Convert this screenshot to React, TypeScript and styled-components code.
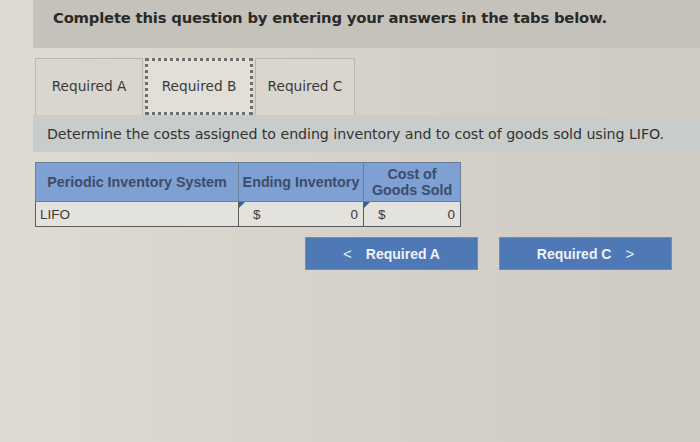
import React from 'react';
import styled, { createGlobalStyle } from 'styled-components';

const GlobalStyle = createGlobalStyle`
  html, body {
    margin: 0;
    padding: 0;
    background: #d8d4cb;
  }
  body {
    font-family: "DejaVu Sans", Verdana, sans-serif;
  }
`;

const Page = styled.div`
  width: 700px;
  height: 442px;
  overflow: hidden;
  display: flex;
  flex-direction: column;
  background: linear-gradient(90deg, #dedbd3 0%, #d6d2c9 50%, #cfcbc2 100%);
`;

const Banner = styled.div`
  margin-left: 33px;
  height: 48px;
  background: #c5c2bb;
  padding: 9px 0 0 20px;
  box-sizing: border-box;
  font-size: 14.8px;
  font-weight: bold;
  color: #2a2a2a;
  letter-spacing: -0.2px;
`;

const Content = styled.div`
  margin-left: 35px;
  padding-top: 10px;
  display: flex;
  flex-direction: column;
`;

const TabRow = styled.div`
  display: flex;
  gap: 2px;
  height: 57px;
  align-items: stretch;
`;

const Tab = styled.div<{ $active?: boolean; $width: number }>`
  width: ${(props) => props.$width}px;
  box-sizing: border-box;
  display: flex;
  align-items: center;
  justify-content: center;
  font-size: 13.7px;
  color: #3a3a3a;
  background: ${(props) => (props.$active ? '#e2dfd8' : '#d9d6ce')};
  border: ${(props) => (props.$active ? '3px dotted #6e6e6e' : '1px solid #bcb8b0')};
  border-bottom: ${(props) => (props.$active ? '3px dotted #6e6e6e' : 'none')};
  padding-bottom: 2px;
`;

const Instruction = styled.div`
  margin-left: -2px;
  height: 37px;
  background: #c8cccb;
  display: flex;
  align-items: center;
  padding-left: 14px;
  font-size: 14.2px;
  letter-spacing: -0.05px;
  color: #333;
`;

const Table = styled.table`
  margin-top: 10px;
  width: 425px;
  table-layout: fixed;
  border-collapse: collapse;
  font-family: "Liberation Sans", Arial, sans-serif;
`;

const Col = styled.col<{ $width: number }>`
  width: ${(props) => props.$width}px;
`;

const HeadCell = styled.th`
  background: #7ea0d2;
  color: #3b4d6a;
  font-size: 14.3px;
  font-weight: bold;
  line-height: 16px;
  height: 38px;
  padding: 0;
  border: 1px solid #6b7f9c;
  text-align: center;
  white-space: nowrap;
  overflow: hidden;
`;

const BodyCell = styled.td`
  background: #e4e2dc;
  border: 1px solid #5c5c5c;
  height: 24px;
  padding: 0 4px;
  font-size: 13.5px;
  color: #3a3a3a;
`;

const AmountCell = styled(BodyCell)`
  position: relative;
  padding: 0;
`;

const Amount = styled.div`
  display: flex;
  justify-content: space-between;
  align-items: center;
  padding: 0 5px 0 14px;
`;

const Flag = styled.span`
  position: absolute;
  left: 0;
  top: 0;
  width: 0;
  height: 0;
  border-top: 6px solid #3d5e8e;
  border-right: 6px solid transparent;
`;

const ButtonRow = styled.div`
  margin-top: 10px;
  margin-left: 270px;
  display: flex;
  gap: 21px;
`;

const NavButton = styled.div`
  width: 173px;
  height: 33px;
  box-sizing: border-box;
  background: #4e78b6;
  border: 1px solid #6a8cc0;
  color: #eef1f6;
  font-family: "Liberation Sans", Arial, sans-serif;
  font-weight: bold;
  font-size: 14px;
  display: flex;
  align-items: center;
  justify-content: center;
  gap: 14px;
`;

const Chevron = styled.span`
  font-size: 15px;
  font-weight: normal;
`;

export default function App(): React.ReactElement {
  return (
    <>
      <GlobalStyle />
      <Page>
        <Banner>Complete this question by entering your answers in the tabs below.</Banner>
        <Content>
          <TabRow>
            <Tab $width={108}>Required A</Tab>
            <Tab $width={108} $active>Required B</Tab>
            <Tab $width={100}>Required C</Tab>
          </TabRow>
          <Instruction>Determine the costs assigned to ending inventory and to cost of goods sold using LIFO.</Instruction>
          <Table>
            <colgroup>
              <Col $width={203} />
              <Col $width={125} />
              <Col $width={97} />
            </colgroup>
            <thead>
              <tr>
                <HeadCell>Periodic Inventory System</HeadCell>
                <HeadCell>Ending Inventory</HeadCell>
                <HeadCell>Cost of<br />Goods Sold</HeadCell>
              </tr>
            </thead>
            <tbody>
              <tr>
                <BodyCell>LIFO</BodyCell>
                <AmountCell>
                  <Flag />
                  <Amount><span>$</span><span>0</span></Amount>
                </AmountCell>
                <AmountCell>
                  <Flag />
                  <Amount><span>$</span><span>0</span></Amount>
                </AmountCell>
              </tr>
            </tbody>
          </Table>
          <ButtonRow>
            <NavButton><Chevron>&lt;</Chevron>Required A</NavButton>
            <NavButton>Required C<Chevron>&gt;</Chevron></NavButton>
          </ButtonRow>
        </Content>
      </Page>
    </>
  );
}
